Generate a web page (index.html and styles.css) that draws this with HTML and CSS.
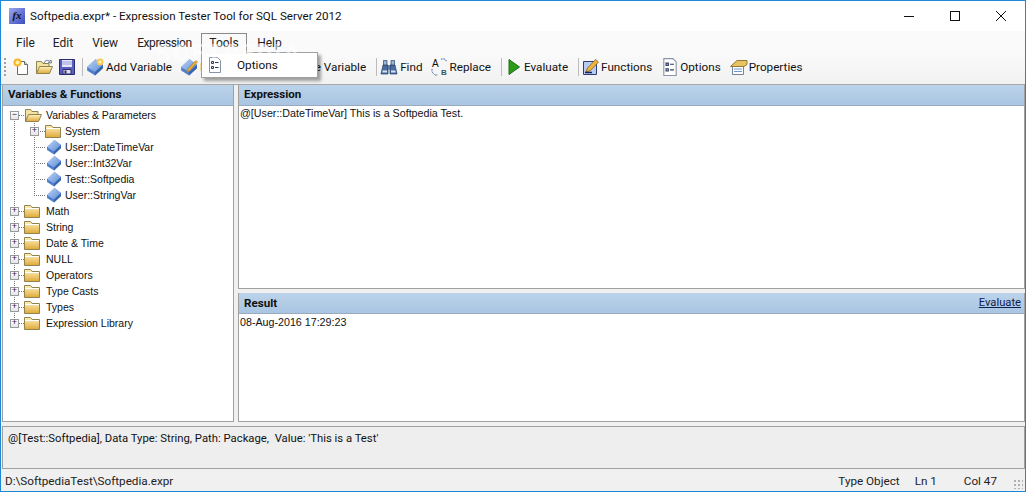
FILE: index.html
```html
<!DOCTYPE html>
<html lang="en">
<head>
<meta charset="utf-8">
<title>Softpedia.expr* - Expression Tester Tool for SQL Server 2012</title>
<link rel="stylesheet" href="styles.css">
</head>
<body>
<svg class="defs" width="0" height="0" aria-hidden="true">
  <defs>
    <linearGradient id="gFolder" x1="0" y1="0" x2="0" y2="1"><stop offset="0" stop-color="#fff3c0"/><stop offset="1" stop-color="#e0a838"/></linearGradient>
    <linearGradient id="gVar" x1="0" y1="0" x2="1" y2="1"><stop offset="0" stop-color="#bcd4f4"/><stop offset="1" stop-color="#5d8cd6"/></linearGradient>
    <symbol id="folder" viewBox="0 0 16 16"><path d="M.5 14.500V2.500h6l1.500 2h7.500v10z" fill="url(#gFolder)" stroke="#8f8350"/><path d="M1 5.500h14" stroke="#fff"/></symbol>
    <symbol id="folderopen" viewBox="0 0 18 16"><path d="M1.500 14.500v-12h5l1.500 2h6v3" fill="#f3e2a2" stroke="#8f8350"/><path d="M1.500 14.500l3-7h13l-3 7z" fill="url(#gFolder)" stroke="#8f8350"/></symbol>
    <symbol id="var" viewBox="0 0 16 16"><path d="M1 8L8.500 1 15 6v3l-7 6.500L1 11z" fill="#4f7fca"/><path d="M1 8L8.500 1 15 6 8 12.500z" fill="url(#gVar)"/><path d="M8 12.500v3L15 9V6z" fill="#3765ae"/></symbol>
    <symbol id="opts" viewBox="0 0 16 16"><path d="M2.500 .5h8l3 3v12h-11z" fill="#fff" stroke="#8a94a8"/><path d="M4.500 4.500h2v2h-2zM4.500 9.500h2v2h-2z" fill="#dfe6f2" stroke="#2c3c5c"/><path d="M8 5.500h3.500M8 10.500h3.500" stroke="#2c3c5c"/></symbol>
  </defs>
</svg>
<div class="window">
  <header class="titlebar">
    <span class="appicon">fx</span>
    <span class="title">Softpedia.expr* - Expression Tester Tool for SQL Server 2012</span>
    <div class="winbtns">
      <svg class="winbtn" width="46" height="30" viewBox="0 0 46 30"><path d="M18 15.500h10" stroke="#111"/></svg>
      <svg class="winbtn" width="46" height="30" viewBox="0 0 46 30"><rect x="18.500" y="10.500" width="9" height="9" fill="none" stroke="#111"/></svg>
      <svg class="winbtn" width="46" height="30" viewBox="0 0 46 30"><path d="M18 10l10 10M28 10L18 20" stroke="#111" fill="none"/></svg>
    </div>
  </header>
  <nav class="menubar">
    <span class="menu m-file">File</span>
    <span class="menu m-edit">Edit</span>
    <span class="menu m-view">View</span>
    <span class="menu m-expr">Expression</span>
    <span class="menu m-tools">Tools</span>
    <span class="menu m-help">Help</span>
  </nav>
  <div class="toolbar">
    <span class="grip"></span>
    <svg class="ti i-std" width="18" height="18" viewBox="0 0 18 18"><path d="M5.500 3.500h7l3 3v10h-10z" fill="#fff" stroke="#6b6b60"/><path d="M12.500 3.500v3h3" fill="#dde" stroke="#6b6b60"/><circle cx="5.500" cy="4.500" r="4" fill="#f7b52c"/><circle cx="5.500" cy="4.500" r="2" fill="#fff2a0"/></svg>
    <svg class="ti i-std" width="18" height="18" viewBox="0 0 18 16"><use href="#folderopen"/><path d="M9 4c1-3 4-3 5.500-2l-1 1.500 3 .5-.5-3-1 1" fill="none" stroke="#6a7a90"/></svg>
    <svg class="ti i-save" width="18" height="18" viewBox="0 0 18 18"><path d="M1.500 1.500h15v15h-15z" fill="#5a5fc0" stroke="#2a2c70"/><path d="M4 2h10v7H4z" fill="#e6e8f8"/><path d="M4 4h10M4 6h10" stroke="#9aa0d8"/><path d="M5 11.500h8V16H5z" fill="#e0e0e8" stroke="#2a2c70"/><path d="M6.500 12.500h2v3h-2z" fill="#2a2c70"/></svg>
    <span class="sep"></span>
    <svg class="ti i-var" width="18" height="18" viewBox="0 0 16 16"><use href="#var"/><circle cx="12.500" cy="3.500" r="3" fill="#f7c94c"/><circle cx="12.500" cy="3.500" r="1.300" fill="#fff6c0"/></svg>
    <span class="tl">Add Variable</span>
    <svg class="ti i-var" width="18" height="18" viewBox="0 0 16 16"><use href="#var"/><path d="M7 10l7-8 1.500 1.500-7 8-2.500 1z" fill="#eeb03a" stroke="#9a6a1a" stroke-width=".5"/></svg>
    <span class="tl t-edit">Edit Variable</span>
    <svg class="ti i-var" width="18" height="18" viewBox="0 0 16 16"><use href="#var"/></svg>
    <span class="tl">Delete Variable</span>
    <span class="sep"></span>
    <svg class="ti i-var" width="18" height="18" viewBox="0 0 18 18"><path d="M1 16l2-9h5v9zM10 16V7h5l2 9z" fill="#4b6c9f" stroke="#27406c" stroke-width=".7"/><path d="M3.500 2.500h3.500V7H3.500zM11 2.500h3.500V7H11zM8 8h2v3H8z" fill="#9ab4d8" stroke="#27406c" stroke-width=".7"/><path d="M2.500 13.500h4.500M11 13.500h4.500" stroke="#d6e4f6" stroke-width="2"/></svg>
    <span class="tl">Find</span>
    <svg class="ti" width="18" height="18" viewBox="0 0 18 18"><text x="1" y="9" class="ab">A</text><text x="10" y="17" class="abb">B</text><path d="M10 1h4l2 3M1 11v3l3 3h3" fill="none" stroke="#3a5f95" stroke-dasharray="1.500 1"/></svg>
    <span class="tl">Replace</span>
    <span class="sep"></span>
    <svg class="ti" width="18" height="18" viewBox="0 0 18 18"><path d="M4 1.500L14.500 9 4 16.500z" fill="#2a9c18" stroke="#1f6e14"/></svg>
    <span class="tl">Evaluate</span>
    <span class="sep"></span>
    <svg class="ti" width="18" height="18" viewBox="0 0 18 18"><path d="M1.500 3.500h13v13h-13z" fill="#b9ccee" stroke="#2c3e78"/><path d="M4 14l1.500-4 8-8.500 3 2.500-8 8.500z" fill="#f0b43a" stroke="#7a5312" stroke-width=".7"/><path d="M3 14.500h7" stroke="#17235a" stroke-width="1.500"/></svg>
    <span class="tl t-wide">Functions</span>
    <svg class="ti" width="18" height="18" viewBox="0 0 16 16"><use href="#opts"/></svg>
    <span class="tl t-wide">Options</span>
    <svg class="ti" width="18" height="18" viewBox="0 0 18 18"><path d="M2.500 8.500h11v8h-11z" fill="#fff" stroke="#77839a"/><path d="M4 11h8M4 13.500h8" stroke="#6a9ad0"/><path d="M.5 8.500L7 2.500h10v4l-3 2z" fill="#e9c45e" stroke="#8f7a3c"/></svg>
    <span class="tl">Properties</span>
  </div>
  <main class="workspace">
    <section class="panel left">
      <h2 class="head">Variables &amp; Functions</h2>
      <ul class="tree">
        <li class="row first"><span class="exp">−</span><svg class="fo" width="18" height="16"><use href="#folderopen"/></svg><span>Variables &amp; Parameters</span></li>
        <li class="row d1"><span class="exp">+</span><svg class="fo" width="16" height="16"><use href="#folder"/></svg><span>System</span></li>
        <li class="row d1 leaf"><svg class="va" width="16" height="16"><use href="#var"/></svg><span>User::DateTimeVar</span></li>
        <li class="row d1 leaf"><svg class="va" width="16" height="16"><use href="#var"/></svg><span>User::Int32Var</span></li>
        <li class="row d1 leaf"><svg class="va" width="16" height="16"><use href="#var"/></svg><span>Test::Softpedia</span></li>
        <li class="row d1 leaf lastchild"><svg class="va" width="16" height="16"><use href="#var"/></svg><span>User::StringVar</span></li>
        <li class="row"><span class="exp">+</span><svg class="fo" width="16" height="16"><use href="#folder"/></svg><span>Math</span></li>
        <li class="row"><span class="exp">+</span><svg class="fo" width="16" height="16"><use href="#folder"/></svg><span>String</span></li>
        <li class="row"><span class="exp">+</span><svg class="fo" width="16" height="16"><use href="#folder"/></svg><span>Date &amp; Time</span></li>
        <li class="row"><span class="exp">+</span><svg class="fo" width="16" height="16"><use href="#folder"/></svg><span>NULL</span></li>
        <li class="row"><span class="exp">+</span><svg class="fo" width="16" height="16"><use href="#folder"/></svg><span>Operators</span></li>
        <li class="row"><span class="exp">+</span><svg class="fo" width="16" height="16"><use href="#folder"/></svg><span>Type Casts</span></li>
        <li class="row"><span class="exp">+</span><svg class="fo" width="16" height="16"><use href="#folder"/></svg><span>Types</span></li>
        <li class="row last"><span class="exp">+</span><svg class="fo" width="16" height="16"><use href="#folder"/></svg><span>Expression Library</span></li>
      </ul>
    </section>
    <div class="rightcol">
      <section class="panel expr">
        <h2 class="head">Expression</h2>
        <p class="body">@[User::DateTimeVar] This is a Softpedia Test.</p>
      </section>
      <section class="panel result">
        <h2 class="head">Result<a class="evlink">Evaluate</a></h2>
        <p class="body">08-Aug-2016 17:29:23</p>
      </section>
    </div>
  </main>
  <div class="info">@[Test::Softpedia], Data Type: String, Path: Package,  Value: 'This is a Test'</div>
  <footer class="status">
    <span class="path">D:\SoftpediaTest\Softpedia.expr</span>
    <span class="st-type">Type Object</span>
    <span class="st-ln">Ln 1</span>
    <span class="st-col">Col 47</span>
    <span class="resize"></span>
  </footer>
  <div class="dropdown">
    <svg width="16" height="16" class="dd-i"><use href="#opts"/></svg>
    <span>Options</span>
  </div>
  <div class="toolstab">Tools</div>
  <div class="watermark">SOFTPEDIA</div>
</div>
</body>
</html>
```
FILE: styles.css
```css
* { box-sizing: border-box; }
html, body { margin: 0; padding: 0; height: 100%; overflow: hidden; background: #fff; }
body { font-family: Roboto, "Noto Sans", sans-serif; font-size: 12px; color: #111; }
.defs { position: absolute; }
.window { position: relative; width: 1026px; height: 492px; border: 1px solid #1e88d8; background: #f0f0f0; display: flex; flex-direction: column; overflow: hidden; }

.titlebar { height: 30px; background: #fff; display: flex; align-items: center; flex: none; }
.appicon { width: 16px; height: 16px; margin-left: 8px; background: linear-gradient(135deg, #9aa8ee, #3c4cc0); color: #111; font: italic bold 11px/15px "Liberation Serif", serif; text-align: center; }
.title { margin-left: 5px; font-size: 11.600px; color: #111; white-space: nowrap; }
.winbtns { margin-left: auto; display: flex; margin-right: 1px; }
.winbtn { display: block; }

.menubar { height: 23px; flex: none; background: #fafafa; display: flex; align-items: center; padding-top: 1px; }
.menu { color: #222; font-size: 12px; }
.m-file { margin-left: 15px; }
.m-edit { margin-left: 18px; }
.m-view { margin-left: 19px; }
.m-expr { margin-left: 19px; letter-spacing: -.4px; }
.m-tools { margin-left: 19px; visibility: hidden; }
.m-help { margin-left: 17px; }

.toolbar { height: 31px; flex: none; background: linear-gradient(#fafafa, #f1f1f1); border-bottom: 1px solid #a8a8a8; display: flex; align-items: center; padding: 0 0 4px 3px; }
.grip { width: 2px; height: 18px; margin-right: 6px; background: repeating-linear-gradient(#a0a0a0 0 2px, transparent 2px 4px); }
.ti { display: block; flex: none; margin-right: 1px; }
.i-std { margin-right: 5px; }
.i-save { margin-right: 4px; }
.i-var { margin-right: 2px; }
.sep { width: 1px; height: 18px; background: #bcbcbc; margin: 0 3px 0 2px; flex: none; }
.tl { color: #111; margin-right: 8px; white-space: nowrap; font-size: 11.700px; }
.t-edit { margin-right: 3px; }
.t-wide { margin-right: 9px; }
.ab { font: 10px "Liberation Sans", sans-serif; fill: #111; }
.abb { font: bold 8px "Liberation Sans", sans-serif; fill: #356; }

.workspace { flex: 1; min-height: 0; display: flex; gap: 4px; padding: 0 0 4px 1px; background: #f0f0f0; }
.panel { border: 1px solid #a0a0a0; border-top: 0; background: #fff; display: flex; flex-direction: column; }
.left { width: 232px; flex: none; }
.rightcol { flex: 1; min-width: 0; display: flex; flex-direction: column; gap: 4px; }
.expr { height: 204px; flex: none; }
.result { flex: 1; min-height: 0; }
.head { margin: 0; height: 21px; flex: none; background: linear-gradient(#bcd3ea, #a9c5e1); border-bottom: 1px solid #9aabbf; font-size: 11.600px; line-height: 19px; font-weight: 700; color: #111; padding-left: 5px; display: flex; justify-content: space-between; }
.result .head { line-height: 20px; }
.evlink { font-weight: 400; font-size: 11.200px; color: #102050; text-decoration: underline; padding-right: 3px; }
.body { margin: 0; padding: 0 1px; line-height: 16px; font-family: "Liberation Sans", sans-serif; font-size: 10.700px; white-space: pre; }
.expr .body { line-height: 14px; }

.tree { list-style: none; margin: 0; padding: 1px 0 0 0; flex: 1; }
.row { height: 16px; display: flex; align-items: center; padding-left: 7px; position: relative; font-family: "Liberation Sans", sans-serif; font-size: 10.500px; white-space: nowrap; }
.row.d1 { padding-left: 27px; }
.row.leaf { padding-left: 43px; }
.row svg { flex: none; margin-right: 6px; position: relative; }
.row.first svg { margin-right: 4px; }
.row.d1 svg { margin-right: 4px; }
.row.leaf svg { margin-right: 3px; }
.row .fo { margin-left: 5px; }
.row.d1 .fo { margin-left: 6px; }
.exp { width: 9px; height: 9px; border: 1px solid #9a9a9a; background: linear-gradient(#fff, #e4e4ea); font: 9px/6px "Liberation Mono", monospace; text-align: center; color: #223; flex: none; position: relative; z-index: 1; }
.row::before { content: ""; position: absolute; left: 11px; top: 0; width: 1px; height: 16px; background: repeating-linear-gradient(#777 0 1px, transparent 1px 2px); }
.row.first::before { top: 8px; height: 8px; }
.row.last::before { height: 8px; }
.row:not(.d1)::after { content: ""; position: absolute; left: 12px; top: 8px; width: 10px; height: 1px; background: repeating-linear-gradient(90deg, #777 0 1px, transparent 1px 2px); }
.row.d1::after { content: ""; position: absolute; left: 31px; top: 0; width: 12px; height: 16px; background:
  repeating-linear-gradient(#777 0 1px, transparent 1px 2px) 0 0 / 1px 100% no-repeat,
  repeating-linear-gradient(90deg, #777 0 1px, transparent 1px 2px) 0 8px / 100% 1px no-repeat; }
.row.lastchild::after { background:
  repeating-linear-gradient(#777 0 1px, transparent 1px 2px) 0 0 / 1px 9px no-repeat,
  repeating-linear-gradient(90deg, #777 0 1px, transparent 1px 2px) 0 8px / 100% 1px no-repeat; }

.info { height: 43px; flex: none; margin: 0 0 0 1px; border: 1px solid #a0a0a0; background: #eeeeee; padding: 4px 5px; font-size: 11.300px; line-height: 16px; white-space: pre; }
.status { height: 22px; flex: none; display: flex; align-items: center; background: #f0f0f0; padding: 1px 0 0 4px; font-size: 11.700px; color: #222; position: relative; }
.path { margin-right: auto; }
.st-type { margin-right: 15px; }
.st-ln { margin-right: 27px; }
.st-col { margin-right: 28px; }
.resize { position: absolute; right: 2px; bottom: 2px; width: 10px; height: 10px; background: radial-gradient(circle, #b0b0b0 1px, transparent 1.200px) 0 0 / 4px 4px; }

.dropdown { position: absolute; left: 200px; top: 51px; width: 117px; height: 26px; background: #fff; border: 1px solid #a0a0a0; box-shadow: 3px 3px 3px rgba(0,0,0,.35); display: flex; align-items: center; padding-left: 5px; z-index: 2; font-size: 11.800px; }
.dd-i { margin-right: 14px; }
.toolstab { position: absolute; left: 200px; top: 32px; width: 46px; height: 21px; background: #fafafa; border: 1px solid #8a8a8a; border-bottom: 0; z-index: 3; text-align: center; line-height: 18px; color: #222; }
.watermark { position: absolute; left: 155px; top: 38px; font-size: 24px; font-weight: 700; letter-spacing: 2px; color: rgba(255,255,255,.55); pointer-events: none; z-index: 4; }
```
